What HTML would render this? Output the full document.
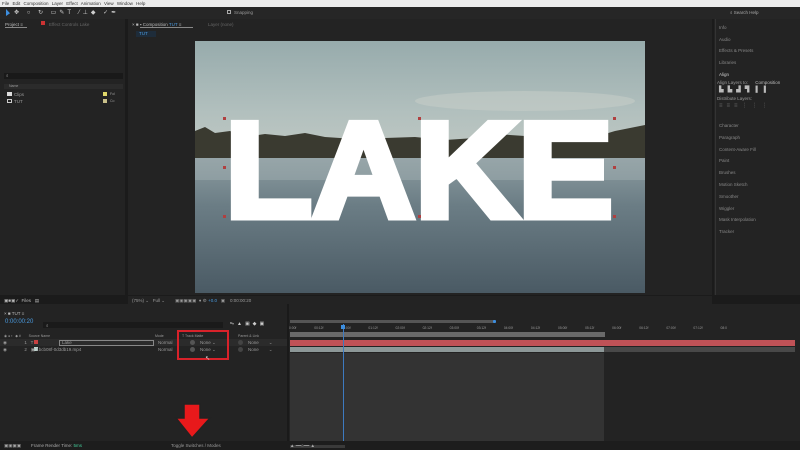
<!DOCTYPE html>
<html><head><meta charset="utf-8"><style>
*{margin:0;padding:0;box-sizing:border-box}
body{width:800px;height:450px;background:#1b1b1b;position:relative;overflow:hidden;font-family:"Liberation Sans","DejaVu Sans",sans-serif;color:#9a9a9a;font-size:4.5px}
.a{position:absolute}
.t{position:absolute;white-space:nowrap;font-size:4.5px;line-height:5px}
</style></head><body>
<!-- menu -->
<div class="a" style="left:0;top:0;width:800px;height:7px;background:#ececec"></div>
<div class="t" style="left:2px;top:1px;color:#333;font-size:4.5px;word-spacing:2px">File Edit Composition Layer Effect Animation View Window Help</div>
<!-- toolbar -->
<div class="a" style="left:0;top:7px;width:800px;height:12px;background:#262626"></div>
<div class="t" style="left:14px;top:9px;color:#cfcfcf;font-size:6px;line-height:8px;letter-spacing:3px">✥ ○ ↻ ▭✎T ⁄⊥◆ ✓✒</div>
<div class="a" style="left:6px;top:9px;width:4px;height:7px;background:#3d8fe0;clip-path:polygon(0 0,100% 60%,0 100%)"></div>
<div class="a" style="left:227px;top:10px;width:4px;height:4px;border:1px solid #aaa"></div>
<div class="t" style="left:234px;top:10px">Snapping</div>
<div class="a" style="left:714px;top:7px;width:86px;height:12px;background:#262626"></div>
<div class="t" style="left:730px;top:10px;color:#aaa">⌕ Search Help</div>
<!-- project panel -->
<div class="a" style="left:0;top:19px;width:125px;height:276px;background:#232323"></div>
<div class="t" style="left:5px;top:22px;color:#bbb">Project ≡</div>
<div class="a" style="left:5px;top:27px;width:22px;height:1px;background:#888"></div>
<div class="a" style="left:41px;top:21px;width:4px;height:4px;background:#c33"></div>
<div class="t" style="left:49px;top:22px;color:#666">Effect Controls Lake</div>
<div class="a" style="left:4px;top:73px;width:119px;height:6px;background:#191919"></div>
<div class="t" style="left:6px;top:73px">⌕</div>
<div class="a" style="left:4px;top:84px;width:119px;height:5px;background:#2b2b2b"></div>
<div class="t" style="left:9px;top:84px;font-size:3.5px">Name</div>
<div class="a" style="left:7px;top:92px;width:5px;height:4px;background:#ddd"></div>
<div class="t" style="left:14px;top:92px">Clips</div>
<div class="a" style="left:7px;top:99px;width:5px;height:4px;border:1px solid #ccc"></div>
<div class="t" style="left:14px;top:99px">TUT</div>
<div class="a" style="left:103px;top:92px;width:4px;height:4px;background:#e0d86a"></div>
<div class="a" style="left:103px;top:99px;width:4px;height:4px;background:#c9c08a"></div>
<div class="t" style="left:110px;top:92px;font-size:3.5px">Fol</div>
<div class="t" style="left:110px;top:99px;font-size:3.5px">Co</div>
<!-- comp panel -->
<div class="a" style="left:128px;top:19px;width:584px;height:276px;background:#232323"></div>
<div class="t" style="left:132px;top:22px;color:#bbb">× ■ ▪ Composition <span style="color:#4a9be0">TUT</span> ≡</div>
<div class="a" style="left:140px;top:27px;width:53px;height:1px;background:#888"></div>
<div class="t" style="left:208px;top:22px;color:#666">Layer (none)</div>
<div class="a" style="left:136px;top:31px;width:20px;height:6px;background:#1e2c3a"></div>
<div class="t" style="left:139px;top:31px;color:#4a9be0">TUT</div>
<div class="a" style="left:195px;top:41px;width:450px;height:252px;overflow:hidden">
<svg width="450" height="252" viewBox="0 0 450 252">
<defs>
<linearGradient id="sky" x1="0" y1="0" x2="0" y2="1"><stop offset="0" stop-color="#97abac"/><stop offset="0.6" stop-color="#b2c0be"/><stop offset="1" stop-color="#c2c9c3"/></linearGradient>
<linearGradient id="wat" x1="0" y1="0" x2="0" y2="1"><stop offset="0" stop-color="#8c9ca0"/><stop offset="0.35" stop-color="#6b7d85"/><stop offset="1" stop-color="#4a5a64"/></linearGradient>
</defs>
<rect width="450" height="120" fill="url(#sky)"/>
<ellipse cx="330" cy="60" rx="110" ry="10" fill="#c9cfc9" opacity="0.5"/>
<path d="M0 90 L10 86 L20 92 L35 90 L50 96 L70 93 L90 95 L110 92 L130 96 L160 98 L190 97 L220 96 L250 99 L280 97 L300 93 L330 95 L350 98 L380 94 L400 96 L420 90 L440 86 L450 84 L450 118 L0 118Z" fill="#3a3a30"/>
<rect y="117" width="450" height="135" fill="url(#wat)"/>
<rect y="117" width="450" height="22" fill="#a4b1b3" opacity="0.45"/>
<text x="30" y="176" font-family="Liberation Sans" font-weight="bold" font-size="136" fill="#fff" stroke="#fff" stroke-width="7" stroke-linejoin="miter" textLength="388" lengthAdjust="spacingAndGlyphs">LAKE</text>
<g fill="#b04040"><rect x="28" y="76" width="3" height="3"/><rect x="223" y="76" width="3" height="3"/><rect x="418" y="76" width="3" height="3"/><rect x="28" y="125" width="3" height="3"/><rect x="418" y="125" width="3" height="3"/><rect x="28" y="174" width="3" height="3"/><rect x="223" y="174" width="3" height="3"/><rect x="418" y="174" width="3" height="3"/></g>
</svg></div>
<div class="a" style="left:128px;top:296px;width:584px;height:8px;background:#232323"></div>
<div class="t" style="left:132px;top:298px">(75%) ⌄ &nbsp; Full ⌄ &nbsp;&nbsp;&nbsp;&nbsp;&nbsp;&nbsp; ▣▣▣▣▣ &nbsp;● ⚙ <span style="color:#4a9be0">+0.0</span> &nbsp; ▣ &nbsp;&nbsp; 0:00:00:20</div>
<div class="t" style="left:4px;top:298px;color:#bbb">▣■▣✓ &nbsp;Files &nbsp; ▤</div>
<!-- right panel -->
<div class="a" style="left:714px;top:19px;width:86px;height:276px;background:#232323"></div>
<div class="a" style="left:715px;top:19px;width:1px;height:276px;background:#333"></div>
<div class="t" style="left:719px;top:22px;line-height:11.7px;color:#888">Info<br>Audio<br>Effects &amp; Presets<br>Libraries<br><span style="color:#ccc">Align</span></div>
<div class="t" style="left:717px;top:80px">Align Layers to: <span style="margin-left:6px;color:#bbb">Composition</span></div>
<div class="t" style="left:719px;top:87px;color:#bbb;font-size:6px;line-height:7px;letter-spacing:4px">▙▙▟▜▐▐</div>
<div class="t" style="left:717px;top:96px">Distribute Layers:</div>
<div class="t" style="left:719px;top:103px;color:#666;font-size:6px;line-height:7px;letter-spacing:4px">≡≡≡⋮⋮⋮</div>
<div class="t" style="left:719px;top:120px;line-height:11.8px;color:#888">Character<br>Paragraph<br>Content-Aware Fill<br>Paint<br>Brushes<br>Motion Sketch<br>Smoother<br>Wiggler<br>Mask Interpolation<br>Tracker</div>
<!-- timeline -->
<div class="a" style="left:0;top:304px;width:800px;height:137px;background:#232323"></div>
<div class="t" style="left:4px;top:311px;color:#bbb">× ■ TUT ≡</div>
<div class="t" style="left:5px;top:319px;color:#4a9be0;font-size:6px;line-height:6px">0:00:00:20</div>
<div class="a" style="left:43px;top:322px;width:180px;height:6px;background:#1a1a1a"></div>
<div class="t" style="left:46px;top:323px">⌕</div>
<div class="t" style="left:230px;top:322px;color:#ccc;font-size:5px;letter-spacing:3px">⥲▲▣◆▣</div>
<div class="t" style="left:4px;top:334px;font-size:3.5px">◉ ● ▪ &nbsp;&nbsp;◆ # &nbsp;&nbsp;&nbsp;&nbsp;&nbsp;&nbsp; Source Name</div>
<div class="t" style="left:155px;top:334px;font-size:3.5px">Mode</div>
<div class="t" style="left:238px;top:334px;font-size:3.5px">Parent &amp; Link</div>
<div class="a" style="left:0;top:339px;width:287px;height:7px;background:#2b2b2b"></div>
<div class="a" style="left:34px;top:340px;width:4px;height:4px;background:#c74040"></div>
<div class="a" style="left:34px;top:347px;width:4px;height:4px;background:#bfd4cf"></div>
<div class="t" style="left:3px;top:340px">◉ &nbsp;&nbsp;&nbsp;&nbsp;&nbsp;&nbsp;&nbsp;&nbsp;&nbsp;&nbsp;&nbsp;&nbsp; 1 &nbsp;&nbsp;T</div>
<div class="t" style="left:3px;top:347px">◉ &nbsp;&nbsp;&nbsp;&nbsp;&nbsp;&nbsp;&nbsp;&nbsp;&nbsp;&nbsp;&nbsp;&nbsp; 2 &nbsp;&nbsp;▣ 1bcb08f-0d3db19.mp4</div>
<div class="a" style="left:59px;top:340px;width:95px;height:6px;border:1px solid #888"></div>
<div class="t" style="left:62px;top:340px">Lake</div>
<div class="t" style="left:158px;top:340px">Normal</div><div class="t" style="left:158px;top:347px">Normal</div>
<div class="a" style="left:190px;top:340px;width:5px;height:5px;border-radius:50%;background:#555"></div>
<div class="a" style="left:190px;top:347px;width:5px;height:5px;border-radius:50%;background:#555"></div>
<div class="t" style="left:200px;top:340px">None ⌄</div><div class="t" style="left:200px;top:347px">None ⌄</div>
<div class="a" style="left:238px;top:340px;width:5px;height:5px;border-radius:50%;background:#444"></div>
<div class="a" style="left:238px;top:347px;width:5px;height:5px;border-radius:50%;background:#444"></div>
<div class="t" style="left:248px;top:340px">None &nbsp;&nbsp;&nbsp;&nbsp;&nbsp;&nbsp; ⌄</div><div class="t" style="left:248px;top:347px">None &nbsp;&nbsp;&nbsp;&nbsp;&nbsp;&nbsp; ⌄</div>
<div class="a" style="left:177px;top:330px;width:52px;height:30px;border:2px solid #d8222a"></div>
<div class="t" style="left:182px;top:334px;font-size:3.5px">T Track Matte</div>
<div class="t" style="left:205px;top:357px;color:#ddd;font-size:6px">↖</div>
<!-- track area -->
<div class="a" style="left:287px;top:304px;width:2px;height:137px;background:#1a1a1a"></div>
<div class="a" style="left:290px;top:320px;width:205px;height:3px;background:#555"></div>
<div class="a" style="left:493px;top:320px;width:3px;height:3px;background:#3d8fe0;border-radius:1px"></div>
<div class="t" style="left:289px;top:326px;font-size:3.3px;word-spacing:17px">0:00f 00:12f 01:00f 01:12f 02:00f 02:12f 03:00f 03:12f 04:00f 04:12f 05:00f 05:12f 06:00f 06:12f 07:00f 07:12f 08:0</div>
<div class="a" style="left:290px;top:332px;width:315px;height:5px;background:#6a6a6a"></div>
<div class="a" style="left:290px;top:340px;width:505px;height:6px;background:#c05257"></div>
<div class="a" style="left:290px;top:347px;width:314px;height:5px;background:#8d9898"></div>
<div class="a" style="left:604px;top:347px;width:191px;height:5px;background:#484848"></div>
<div class="a" style="left:290px;top:353px;width:314px;height:88px;background:#333"></div>
<div class="a" style="left:343px;top:324px;width:1px;height:117px;background:#3d7ac0"></div>
<div class="a" style="left:341px;top:325px;width:4px;height:4px;background:#3d8fe0"></div>
<!-- arrow -->
<svg class="a" style="left:174px;top:403px" width="38" height="36"><polygon points="10,1 26,1 26,15 36,15 18,35 2,15 10,15" fill="#e8191b" stroke="#222" stroke-width="1.5"/></svg>
<!-- bottom bar -->
<div class="a" style="left:0;top:441px;width:800px;height:9px;background:#1d1d1d"></div>
<div class="t" style="left:4px;top:443px;color:#aaa">▣▣▣▣ &nbsp;&nbsp;&nbsp;&nbsp;&nbsp;&nbsp; Frame Render Time: <span style="color:#4c9">5ms</span></div>
<div class="t" style="left:171px;top:443px">Toggle Switches / Modes</div>
<div class="a" style="left:290px;top:445px;width:55px;height:3px;background:#3a3a3a"></div>
<div class="t" style="left:290px;top:443px;color:#aaa">▲ ━━○━━ ▲</div>
</body></html>
